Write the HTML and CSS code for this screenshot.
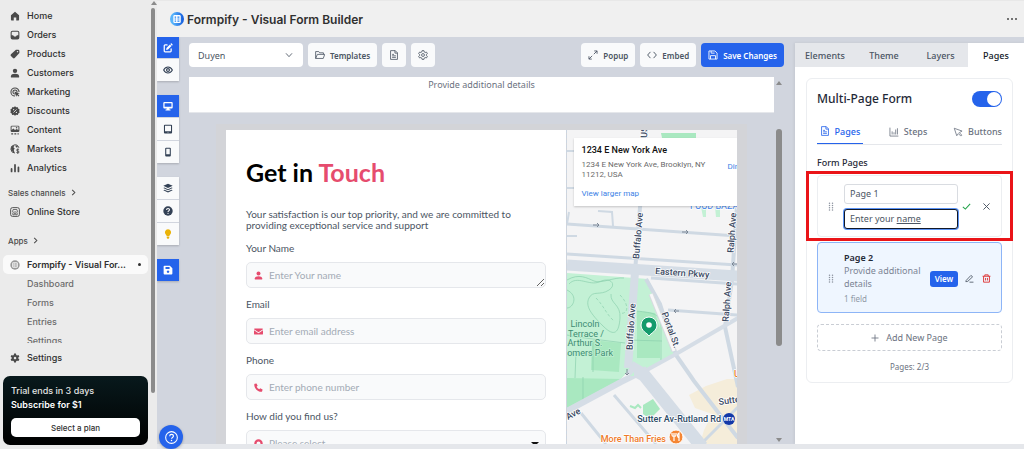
FILE: index.html
```html
<!DOCTYPE html>
<html lang="en">
<head>
<meta charset="utf-8">
<meta name="viewport" content="width=device-width, initial-scale=1">
<title>Formpify - Visual Form Builder</title>
<link rel="stylesheet" href="styles.css">
</head>
<body>
<svg class="sprite" aria-hidden="true">
  <symbol id="home" viewBox="0 0 16 16"><path fill="currentColor" d="M8 1 1.5 6.8V14a1 1 0 0 0 1 1H6v-4.500h4V15h3.500a1 1 0 0 0 1-1V6.800z"/></symbol>
  <symbol id="inbox" viewBox="0 0 16 16"><path fill="currentColor" fill-rule="evenodd" d="M4 1h8a3 3 0 0 1 3 3v8a3 3 0 0 1-3 3H4a3 3 0 0 1-3-3V4a3 3 0 0 1 3-3zm0 1.700A1.300 1.300 0 0 0 2.700 4v4.500H5l1.500 2h3l1.500-2h2.300V4A1.300 1.300 0 0 0 12 2.700z"/></symbol>
  <symbol id="tag" viewBox="0 0 16 16"><path fill="currentColor" fill-rule="evenodd" d="M9.500 1H13a2 2 0 0 1 2 2v3.500L7.500 14.500a2 2 0 0 1-2.800 0L1.500 11.300a2 2 0 0 1 0-2.800zM12 3a1.100 1.100 0 1 0 .1 0z"/></symbol>
  <symbol id="person" viewBox="0 0 16 16"><circle cx="8" cy="4.500" r="3.500" fill="currentColor"/><path fill="currentColor" d="M1.500 15v-2c0-2.500 3-3.700 6.500-3.700s6.500 1.200 6.500 3.700v2z"/></symbol>
  <symbol id="target" viewBox="0 0 16 16"><path fill="none" stroke="currentColor" stroke-width="1.700" d="M14.500 8A6.500 6.500 0 1 0 8 14.500M11.300 8A3.300 3.300 0 1 0 8 11.300"/><path fill="currentColor" d="m7 7 8.500 3-3 1.300 2.500 2.500-1.300 1.300-2.500-2.500L10 15.500z"/></symbol>
  <symbol id="discount" viewBox="0 0 16 16"><path fill="currentColor" d="m8 .5 2 1.500 2.600-.2.700 2.500 2.200 1.400L14.700 8l.8 2.400-2.200 1.400-.7 2.400L10 14l-2 1.500L6 14l-2.600.2-.7-2.400L.5 10.400 1.300 8 .5 5.700l2.200-1.400.7-2.500L6 2z"/><path stroke="#ebebeb" stroke-width="1.300" d="m5.500 10.500 5-5"/><circle cx="5.800" cy="5.800" r="1" fill="#ebebeb"/><circle cx="10.200" cy="10.200" r="1" fill="#ebebeb"/></symbol>
  <symbol id="image" viewBox="0 0 16 16"><path fill="currentColor" fill-rule="evenodd" d="M3 1h10a2 2 0 0 1 2 2v6a2 2 0 0 1-2 2H3a2 2 0 0 1-2-2V3a2 2 0 0 1 2-2zM2.500 8l3-2.500L8 8l2.500-1.500 3 1.500V2.500h-11z"/><circle cx="10.500" cy="4.500" r="1.200" fill="currentColor"/><path stroke="currentColor" stroke-width="2" d="M2 14h3m2 0h3m2 0h2"/></symbol>
  <symbol id="globe" viewBox="0 0 16 16"><path fill="none" stroke="currentColor" stroke-width="1.600" d="M8 14.400A6.500 6.500 0 1 1 14.200 6"/><path fill="currentColor" d="M7 2.500 5.500 5l2 2L6 9.500l1 3-2 .5-3.500-5L3 3.500zM9 2l4 2-2 2-2-1.500z"/><path fill="none" stroke="currentColor" stroke-width="1.500" d="M14.500 9c-1-1-4-1-4 .8s4 1 4 3-3.500 1.700-4.300.5M12.400 7.500v8"/></symbol>
  <symbol id="bars" viewBox="0 0 16 16"><path stroke="currentColor" stroke-width="2.800" stroke-linecap="round" d="M2.500 9.500v4M8 3v10.500M13.500 7v6.500"/></symbol>
  <symbol id="store" viewBox="0 0 16 16"><rect x="1" y="1" width="14" height="14" rx="3" fill="none" stroke="currentColor" stroke-width="1.500"/><path fill="none" stroke="currentColor" stroke-width="1.200" d="M4 7.500 5 4h6l1 3.500c-1 1.300-2 1-2.700 0-.7 1-2 1-2.700 0-.7 1-1.800 1.200-2.600 0zM4.500 9v3.500H7V10h2v2.500h2.500V9"/></symbol>
  <symbol id="chevron-right" viewBox="0 0 8 8"><path fill="none" stroke="currentColor" stroke-width="1.200" d="m2.500 1 3 3-3 3"/></symbol>
  <symbol id="chevron-down" viewBox="0 0 12 12"><path fill="none" stroke="currentColor" stroke-width="1.300" d="m1.500 3.500 4.500 5 4.500-5"/></symbol>
  <symbol id="app" viewBox="0 0 16 16"><circle cx="8" cy="8" r="7.500" fill="#999"/><rect x="3.500" y="3.500" width="9" height="9" rx="2" fill="#f5f5f5"/><path stroke="#777" stroke-width="1.400" d="M5.500 6h1.500m1.500 0h2M5.500 8h1.500m1.500 0h2M5.500 10h1.500m1.500 0h2"/></symbol>
  <symbol id="logo" viewBox="0 0 16 16"><linearGradient id="brand"><stop offset=".2" stop-color="#58b4fb"/><stop offset="1" stop-color="#1259dc"/></linearGradient><circle cx="8" cy="8" r="8" fill="url(#brand)"/><rect x="3.800" y="3.500" width="8.500" height="9" rx="1.500" fill="#fff"/><path stroke="#2684f1" stroke-width="1.400" d="M5.300 5.800h1.700m1.500 0h2.300M5.300 8h1.700m1.500 0h2.300M5.300 10.300h1.700m1.500 0h2.300"/></symbol>
  <symbol id="cog" viewBox="0 0 16 16"><path fill="currentColor" fill-rule="evenodd" d="M6.500.8h3l.5 2.300 1.300.7 2.200-.7 1.500 2.600-1.700 1.600v1.400l1.700 1.600-1.500 2.600-2.200-.7-1.300.7-.5 2.300h-3L6 12.900l-1.300-.7-2.200.7L1 10.300l1.700-1.600V7.300L1 5.700l1.500-2.600 2.200.7L6 3.100zM8 6a2 2 0 1 0 .1 0z"/></symbol>
  <symbol id="edit" viewBox="0 0 16 16"><path fill="none" stroke="currentColor" stroke-width="2" stroke-linecap="round" d="M6.500 3H3.300A1.300 1.300 0 0 0 2 4.300v8.400A1.300 1.300 0 0 0 3.300 14h8.400a1.300 1.300 0 0 0 1.300-1.300V9.500"/><path fill="currentColor" d="m5.500 8 5.600-5.600 2.500 2.500L8 10.500l-3 .5zM11.800 1.700l.8-.8a1 1 0 0 1 1.400 0l1.100 1.100a1 1 0 0 1 0 1.400l-.8.800z"/></symbol>
  <symbol id="eye" viewBox="0 0 16 16"><path fill="none" stroke="currentColor" stroke-width="1.700" d="M1 8c1.700-3 4-4.800 7-4.800S13.300 5 15 8c-1.700 3-4 4.800-7 4.800S2.700 11 1 8z"/><circle cx="8" cy="8" r="2.300" fill="none" stroke="currentColor" stroke-width="1.900"/></symbol>
  <symbol id="desktop" viewBox="0 0 16 16"><path fill="currentColor" fill-rule="evenodd" d="M2 1.500h12A1.500 1.500 0 0 1 15.500 3v7.500A1.500 1.500 0 0 1 14 12h-4l.5 1.500H12V15H4v-1.500h1.500L6 12H2a1.500 1.500 0 0 1-1.500-1.500V3A1.500 1.500 0 0 1 2 1.500zm.5 2V9h11V3.500z"/></symbol>
  <symbol id="tablet" viewBox="0 0 16 16"><path fill="currentColor" fill-rule="evenodd" d="M3 1h10a1.500 1.500 0 0 1 1.500 1.500v11A1.500 1.500 0 0 1 13 15H3a1.500 1.500 0 0 1-1.500-1.500v-11A1.500 1.500 0 0 1 3 1zm.2 1.600v9h9.600v-9z"/><circle cx="8" cy="13.200" r=".7" fill="#fff"/></symbol>
  <symbol id="phone-device" viewBox="0 0 16 16"><path fill="currentColor" fill-rule="evenodd" d="M5 1h6a1.500 1.500 0 0 1 1.500 1.500v11A1.500 1.500 0 0 1 11 15H5a1.500 1.500 0 0 1-1.500-1.500v-11A1.500 1.500 0 0 1 5 1zm.2 1.800v8.700h5.600V2.800z"/></symbol>
  <symbol id="layers" viewBox="0 0 16 16"><path fill="currentColor" d="m8 1 7.500 3.500L8 8 .5 4.500zM2.300 7.200 8 9.800l5.700-2.600 1.800.8L8 11.500.5 8zM2.300 10.700 8 13.300l5.700-2.600 1.800.8L8 15 .5 11.500z"/></symbol>
  <symbol id="question" viewBox="0 0 16 16"><circle cx="8" cy="8" r="7.500" fill="currentColor"/><path fill="none" stroke="#fff" stroke-width="1.700" d="M5.700 6.300c0-3 4.700-2.800 4.700-.2 0 1.700-2.400 1.700-2.400 3.300"/><circle cx="8" cy="11.600" r="1" fill="#fff"/></symbol>
  <symbol id="bulb" viewBox="0 0 16 16"><path fill="currentColor" d="M8 .5a5 5 0 0 1 3.300 8.700C10.500 10 10.200 10.500 10 11.500H6c-.2-1-.5-1.500-1.300-2.300A5 5 0 0 1 8 .5zM6 12.500h4v1.300A1.700 1.700 0 0 1 8.300 15.500h-.6A1.700 1.700 0 0 1 6 13.800z"/></symbol>
  <symbol id="disk" viewBox="0 0 16 16"><path fill="currentColor" fill-rule="evenodd" d="M2.500 1H11l4 4v8.500a1.500 1.500 0 0 1-1.500 1.500h-11A1.500 1.500 0 0 1 1 13.500v-11A1.500 1.500 0 0 1 2.500 1zM4 3v3.500h6.500V3zm4 5.700a2 2 0 1 0 .1 0z"/></symbol>
  <symbol id="disk-line" viewBox="0 0 16 16"><path fill="none" stroke="currentColor" stroke-width="1.400" stroke-linejoin="round" d="M1.500 1.500H11L14.500 5v9.500h-13zM4 14.500V9h8v5.500M5 1.500V5h5.500"/></symbol>
  <symbol id="folder" viewBox="0 0 16 16"><path fill="none" stroke="currentColor" stroke-width="1.300" stroke-linejoin="round" d="M1 13.500v-11h5L7.500 4.500h6V7M1 13.500 3.800 7h11.700l-2.300 6.500z"/></symbol>
  <symbol id="doc" viewBox="0 0 16 16"><path fill="none" stroke="currentColor" stroke-width="1.300" stroke-linejoin="round" d="M2.500 1H10l3.500 3.500V15h-11zM9.500 1v4h4M5 7h3M5 9.300h6M5 11.800h6"/></symbol>
  <symbol id="gear-line" viewBox="0 0 16 16"><path fill="none" stroke="currentColor" stroke-width="1.300" stroke-linejoin="round" d="M6.500 1h3l.5 2.200 1.300.8 2.200-.7L15 5.900l-1.700 1.500v1.200l1.700 1.500-1.500 2.600-2.200-.7-1.300.8-.5 2.200h-3L6 12.800l-1.300-.8-2.200.7L1 10.100l1.700-1.500V7.400L1 5.900l1.500-2.600 2.200.7L6 3.200z"/><circle cx="8" cy="8" r="2.300" fill="none" stroke="currentColor" stroke-width="1.300"/></symbol>
  <symbol id="expand" viewBox="0 0 16 16"><path fill="none" stroke="currentColor" stroke-width="1.400" d="M10 1.500h4.500V6M14.500 1.500 9.300 6.700M6 14.500H1.500V10M1.500 14.500l5.200-5.200"/></symbol>
  <symbol id="code" viewBox="0 0 16 16"><path fill="none" stroke="currentColor" stroke-width="1.500" d="M5.500 3 1 8l4.500 5M10.500 3 15 8l-4.500 5"/></symbol>
  <symbol id="chart" viewBox="0 0 16 16"><path fill="none" stroke="currentColor" stroke-width="1.300" d="M1.500 1v13.500H15M5 7v5M8 8.500V12M10.700 4v8M13.500 2v10"/></symbol>
  <symbol id="cursor" viewBox="0 0 16 16"><path fill="none" stroke="currentColor" stroke-width="1.300" stroke-linejoin="round" d="m2 2 12.500 4.500L10 9l4 4-1.500 1.500-4-4L6 14z"/></symbol>
  <symbol id="grip" viewBox="0 0 8 12"><g fill="currentColor"><circle cx="2" cy="1.500" r="1"/><circle cx="6" cy="1.500" r="1"/><circle cx="2" cy="4.500" r="1"/><circle cx="6" cy="4.500" r="1"/><circle cx="2" cy="7.500" r="1"/><circle cx="6" cy="7.500" r="1"/><circle cx="2" cy="10.500" r="1"/><circle cx="6" cy="10.500" r="1"/></g></symbol>
  <symbol id="check" viewBox="0 0 16 16"><path fill="none" stroke="currentColor" stroke-width="1.900" d="m1.500 8.500 4.500 4 8.500-9"/></symbol>
  <symbol id="close" viewBox="0 0 16 16"><path stroke="currentColor" stroke-width="1.700" d="m2.500 2.500 11 11m0-11-11 11"/></symbol>
  <symbol id="pencil" viewBox="0 0 16 16"><path fill="none" stroke="currentColor" stroke-width="1.500" stroke-linejoin="round" d="m2 11.500 8.500-9 3 2.500L5 13l-3.500.7zM8 14.500h7"/></symbol>
  <symbol id="trash" viewBox="0 0 16 16"><path fill="none" stroke="currentColor" stroke-width="1.600" d="M1 4h14M5 4V1.500h6V4M2.800 4v10.500h10.400V4M6.300 7v4.500M9.700 7v4.500"/></symbol>
  <symbol id="plus" viewBox="0 0 16 16"><path stroke="currentColor" stroke-width="1.700" d="M8 1v14M1 8h14"/></symbol>
  <symbol id="mail" viewBox="0 0 16 16"><path fill="currentColor" d="M1.500 2.500h13A1.500 1.500 0 0 1 16 4L8 9.500 0 4a1.500 1.500 0 0 1 1.500-1.500zM0 5.800l8 5.400 8-5.400V12a1.500 1.500 0 0 1-1.500 1.500h-13A1.500 1.500 0 0 1 0 12z"/></symbol>
  <symbol id="phone" viewBox="0 0 16 16"><path fill="currentColor" d="M1.500 1.500 4.500.7 6.500 5 4.700 6.600a10 10 0 0 0 4.700 4.700L11 9.500l4.300 2-.8 3A1.500 1.500 0 0 1 13 15.500C6.500 15.500.5 9.500.5 3a1.500 1.500 0 0 1 1-1.500z"/></symbol>
  <symbol id="ring" viewBox="0 0 16 16"><circle cx="8" cy="8" r="5.500" fill="none" stroke="currentColor" stroke-width="4"/></symbol>
  <symbol id="help" viewBox="0 0 16 16"><circle cx="8" cy="8" r="7.200" fill="none" stroke="currentColor" stroke-width="1.300"/><path fill="none" stroke="currentColor" stroke-width="1.400" d="M5.800 6.400c0-3 4.600-2.800 4.600-.2 0 1.700-2.400 1.700-2.400 3.400"/><circle cx="8" cy="11.700" r=".9" fill="currentColor"/></symbol>
</svg>

<div class="app">
  <aside class="sidebar">
    <div class="sidebar-body">
      <nav class="nav" aria-label="Main">
        <a href="#"><svg><use href="#home"/></svg>Home</a>
        <a href="#"><svg><use href="#inbox"/></svg>Orders</a>
        <a href="#"><svg><use href="#tag"/></svg>Products</a>
        <a href="#"><svg><use href="#person"/></svg>Customers</a>
        <a href="#"><svg><use href="#target"/></svg>Marketing</a>
        <a href="#"><svg><use href="#discount"/></svg>Discounts</a>
        <a href="#"><svg><use href="#image"/></svg>Content</a>
        <a href="#"><svg><use href="#globe"/></svg>Markets</a>
        <a href="#"><svg><use href="#bars"/></svg>Analytics</a>
        <a href="#" class="nav-group">Sales channels<svg><use href="#chevron-right"/></svg></a>
        <a href="#"><svg><use href="#store"/></svg>Online Store</a>
        <a href="#" class="nav-group apps">Apps<svg><use href="#chevron-right"/></svg></a>
        <a href="#" class="current"><svg><use href="#app"/></svg>Formpify - Visual For...<span class="dot"></span></a>
        <a href="#" class="sub">Dashboard</a>
        <a href="#" class="sub">Forms</a>
        <a href="#" class="sub">Entries</a>
        <a href="#" class="sub">Settings</a>
      </nav>
      <a href="#" class="settings"><svg><use href="#cog"/></svg>Settings</a>
      <section class="trial">
        <p>Trial ends in 3 days</p>
        <p class="offer">Subscribe for $1</p>
        <button type="button">Select a plan</button>
      </section>
    </div>
    <div class="side-scroll"><i class="arrow up"></i><i class="thumb"></i></div>
  </aside>

  <main class="main">
    <header class="header">
      <svg class="logo"><use href="#logo"/></svg>
      <h1>Formpify - Visual Form Builder</h1>
      <button type="button" class="more" aria-label="More"><i></i><i></i><i></i></button>
    </header>

    <div class="builder">
      <div class="rail">
        <div class="rail-group first">
          <button type="button" class="on" aria-label="Edit"><svg><use href="#edit"/></svg></button>
          <button type="button" aria-label="Preview"><svg><use href="#eye"/></svg></button>
        </div>
        <div class="rail-group">
          <button type="button" class="on" aria-label="Desktop"><svg><use href="#desktop"/></svg></button>
          <button type="button" aria-label="Tablet"><svg><use href="#tablet"/></svg></button>
          <button type="button" aria-label="Mobile"><svg><use href="#phone-device"/></svg></button>
        </div>
        <div class="rail-group">
          <button type="button" aria-label="Layers"><svg><use href="#layers"/></svg></button>
          <button type="button" aria-label="Guide"><svg><use href="#question"/></svg></button>
          <button type="button" class="tip" aria-label="Tips"><svg><use href="#bulb"/></svg></button>
        </div>
        <div class="rail-group">
          <button type="button" class="on" aria-label="Save"><svg><use href="#disk"/></svg></button>
        </div>
      </div>

      <div class="work">
        <div class="toolbar">
          <div class="picker">
            <select aria-label="Form"><option>Duyen</option></select>
            <svg><use href="#chevron-down"/></svg>
          </div>
          <button type="button" class="tool"><svg><use href="#folder"/></svg>Templates</button>
          <button type="button" class="tool square" aria-label="Document"><svg><use href="#doc"/></svg></button>
          <button type="button" class="tool square" aria-label="Settings"><svg><use href="#gear-line"/></svg></button>
          <span class="spacer"></span>
          <button type="button" class="tool"><svg><use href="#expand"/></svg>Popup</button>
          <button type="button" class="tool"><svg><use href="#code"/></svg>Embed</button>
          <button type="button" class="tool save"><svg><use href="#disk-line"/></svg>Save Changes</button>
        </div>

        <div class="stage">
          <div class="stage-body">
            <p class="banner">Provide additional details</p>
            <div class="canvas">
              <form class="form">
                <h2>Get in <span>Touch</span></h2>
                <p class="intro">Your satisfaction is our top priority, and we are committed to providing exceptional service and support</p>
                <label for="name">Your Name</label>
                <div class="field"><svg><use href="#person"/></svg><textarea id="name" rows="1" placeholder="Enter Your name"></textarea></div>
                <label for="email">Email</label>
                <div class="field"><svg><use href="#mail"/></svg><input id="email" type="email" placeholder="Enter email address"></div>
                <label for="tel">Phone</label>
                <div class="field"><svg><use href="#phone"/></svg><input id="tel" type="tel" placeholder="Enter phone number"></div>
                <label for="source">How did you find us?</label>
                <div class="field"><svg><use href="#ring"/></svg><select id="source"><option>Please select</option></select><i class="caret"></i></div>
              </form>
              <div class="map">
                <svg class="map-art" viewBox="0 0 171 314" preserveAspectRatio="xMinYMin slice" role="img" aria-label="Map">
                  <rect width="171" height="320" fill="#f4f4f5"/>
                  <path fill="#f5edda" d="m122 265 17-9 21-7h11v65h-38l4-14 8-16-17-6z"/>
                  <path fill="#a9e8c0" d="M94 3h35v5H95z"/>
                  <path fill="#c3f1d5" d="M134 77h5v10h-3zM148 77h5v10h-4z"/>
                  <path fill="#c3f1d5" d="m0 143 81 6 12 25 16 51-30 16-17-1-9 10-53 29z"/>
                  <path fill="#a9e8c0" d="m25 210 29 3-2 29-28-2zM70 181l18 2 5 16v29H70zM0 248l54 1-54 29z"/>
                  <path fill="#a9e8c0" d="m76 275 10-6 7 10-10 10-7-5z"/>
                  <path fill="none" stroke="#a9e8c0" stroke-width="2" d="m63 276 5 2 3-3 3 3"/>
                  <g fill="none" stroke="#8bd0ad" stroke-width=".7">
                    <path d="M2 154c8-9 20 2 30-2 12-6 18 3 10 8-9 6-16 0-20 8s2 16 14 28 16 6 17-8-10-14-9-24M0 160c12 6 6 18 0 18M0 150c12-7 20-2 27 1s20-4 30-3M26 212v30M0 205l10 2 48 6M70 181c16 2 22 2 24 14v35M60 210l35 1M16 247v24M9 222l-1 26M60 234l9 2"/>
                    <path stroke-dasharray="3 2" d="M29 168c8 8 10 16 18 23M53 165c10 10 8 20 0 18"/>
                  </g>
                  <g fill="none" stroke="#cfd9e3">
                    <path stroke-width="2" d="M0 21h8M0 58h8M31 81l14 1 1 14M2 82 0 94M0 106h10"/>
                    <path stroke-width="3" d="m0 94 171 12M0 124l171 11M84 148l87 6M101 180l70 5"/>
                    <path stroke-width="4" d="M79 0 68 142M170 75l-5 75-7 47 13 60"/>
                    <path stroke-width="4" d="m79 149 14 25 16 51 18 26 44 57"/>
                    <path stroke-width="3" d="m14 283 25 31M47 265l42 49M171 277l-38 38"/>
                  </g>
                  <g fill="none" stroke="#d5dde6">
                    <path stroke-width="11" d="m0 135 171 11"/>
                    <path stroke-width="8" d="m68 142-7 96"/>
                    <path stroke-width="6" d="m0 281 54-29 26-13"/>
                    <path stroke-width="4" d="m78 241 31-17 62-36"/>
                    <path stroke-width="13" d="m63 237 14 8 58 72"/>
                  </g>
                  <path fill="none" stroke="#d8dbe0" stroke-width="5" d="m84 164 23 57"/>
                  <path fill="none" stroke="#f7f7f8" stroke-width="3" d="m84 164 23 57"/>
                  <path fill="#c3f1d5" d="m63 246 4-4v4z"/>
                  <g fill="none" stroke="#74808e" stroke-width=".9"><path d="M26 95h6m-2-2 2 2-2 2M115 102h6m-2-2 2 2-2 2M112 181h-5m2-2-2 2 2 2M170 134h-5m2-2-2 2 2 2M60 239v6m-2-2 2 2 2-2"/></g>
                  <g class="street">
                    <text x="80" y="8" transform="rotate(-88 80 8)">US</text>
                    <text x="74" y="106" text-anchor="middle" transform="rotate(-85 74 106)">Buffalo Ave</text>
                    <text x="67" y="197" text-anchor="middle" transform="rotate(-86 67 197)">Buffalo Ave</text>
                    <text x="168" y="103" text-anchor="middle" transform="rotate(-86 168 103)">Ralph Ave</text>
                    <text x="163" y="172" text-anchor="middle" transform="rotate(-86 163 172)">Ralph Ave</text>
                    <text x="115" y="146" text-anchor="middle" transform="rotate(4 115 146)">Eastern Pkwy</text>
                    <text x="101" y="201" text-anchor="middle" transform="rotate(70 101 201)">Portal St.</text>
                    <text x="1" y="290" transform="rotate(-28 1 290)">Ave</text>
                    <text x="152" y="275" transform="rotate(-8 152 275)">Sutter</text>
                  </g>
                  <g class="park" text-anchor="middle">
                    <text x="18" y="197">Lincoln</text><text x="19" y="207">Terrace /</text><text x="18" y="216">Arthur S.</text>
                    <text x="46" y="226" text-anchor="end">Somers Park</text>
                  </g>
                  <text class="store" x="123" y="79">FOOD BAZAAR</text>
                  <text class="station" x="154" y="292" text-anchor="end">Sutter Av-Rutland Rd</text>
                  <circle cx="162" cy="289" r="6" fill="#1238a8"/>
                  <text class="mta" x="162" y="291" text-anchor="middle">MTA</text>
                  <text class="food" x="99" y="312" text-anchor="end">More Than Fries</text>
                  <text class="food" x="167" y="247">U</text>
                  <circle cx="109" cy="307" r="7" fill="#f58634" stroke="#fff"/>
                  <path fill="none" stroke="#fff" stroke-width="1.200" d="M107 303v8m-2-8v2c0 2 4 2 4 0v-2m3 8v-8c-2 1-2 4 0 5"/>
                  <path fill="#149b6c" stroke="#fff" d="M82 206c-2-3-8-5-8-11a8 8 0 0 1 16 0c0 6-6 8-8 11z"/>
                  <circle cx="82" cy="195" r="2.800" fill="#fff"/>
                </svg>
                <div class="place">
                  <div class="place-text">
                    <h3>1234 E New York Ave</h3>
                    <p>1234 E New York Ave, Brooklyn, NY 11212, USA</p>
                    <a href="#">View larger map</a>
                  </div>
                  <a href="#" class="directions">Directions</a>
                </div>
              </div>
            </div>
          </div>
          <div class="stage-scroll"><i class="arrow up"></i><i class="thumb"></i><i class="arrow down"></i></div>
        </div>
      </div>

      <aside class="panel">
        <div class="tabs" role="tablist">
          <button type="button" role="tab">Elements</button>
          <button type="button" role="tab">Theme</button>
          <button type="button" role="tab">Layers</button>
          <button type="button" role="tab" aria-selected="true" class="active">Pages</button>
        </div>
        <section class="card">
          <div class="card-head">
            <label for="multi">Multi-Page Form</label>
            <input id="multi" type="checkbox" role="switch" class="switch" checked>
          </div>
          <div class="subtabs" role="tablist">
            <button type="button" role="tab" aria-selected="true" class="active"><svg><use href="#doc"/></svg>Pages</button>
            <button type="button" role="tab"><svg><use href="#chart"/></svg>Steps</button>
            <button type="button" role="tab"><svg><use href="#cursor"/></svg>Buttons</button>
          </div>
          <h3>Form Pages</h3>
          <div class="page editing">
            <svg class="grip"><use href="#grip"/></svg>
            <div class="page-inputs">
              <input type="text" aria-label="Page title" value="Page 1">
              <div class="focus" role="textbox" contenteditable="true" aria-label="Page description">Enter your <u>name</u></div>
            </div>
            <button type="button" class="icon ok" aria-label="Confirm"><svg><use href="#check"/></svg></button>
            <button type="button" class="icon" aria-label="Cancel"><svg><use href="#close"/></svg></button>
          </div>
          <div class="page selected">
            <svg class="grip"><use href="#grip"/></svg>
            <div class="page-info">
              <h4>Page 2</h4>
              <p>Provide additional details</p>
              <small>1 field</small>
            </div>
            <button type="button" class="view">View</button>
            <button type="button" class="icon" aria-label="Rename"><svg><use href="#pencil"/></svg></button>
            <button type="button" class="icon danger" aria-label="Delete"><svg><use href="#trash"/></svg></button>
          </div>
          <button type="button" class="add"><svg><use href="#plus"/></svg>Add New Page</button>
          <p class="count">Pages: 2/3</p>
          <div class="highlight"></div>
        </section>
      </aside>
    </div>
    <button type="button" class="help" aria-label="Help"><svg><use href="#help"/></svg></button>
  </main>
</div>
</body>
</html>
```
FILE: styles.css
```css
* { box-sizing: border-box; }
body, h1, h2, h3, h4, p { margin: 0; }
body { font-family: Inter, "Liberation Sans", sans-serif; background: #e5e7eb; color: #303030; }
button, input, select, textarea { font: inherit; color: inherit; margin: 0; padding: 0; border: 0; background: none; }
button { display: flex; align-items: center; justify-content: center; white-space: nowrap; }
a { color: inherit; text-decoration: none; }
svg { width: 10px; height: 10px; flex: none; }
.sprite { position: absolute; width: 0; height: 0; }

.app { display: grid; grid-template-columns: 157px minmax(0, 1fr); height: 100vh; overflow: hidden; }

/* Sidebar */
.sidebar { display: flex; background: #ebebeb; min-height: 0; font-size: 9px; font-weight: 500; }
.sidebar-body { flex: 1; min-width: 0; display: flex; flex-direction: column; padding: 6px 2px 4px 3px; }
.nav { flex: 1; min-height: 0; overflow: hidden; }
.nav a, .settings { display: flex; align-items: center; gap: 7px; height: 19px; flex: none; padding-left: 7px; color: #303030; white-space: nowrap; }
.nav svg, .settings svg { color: #4a4a4a; }
.nav .nav-group { margin-top: 6px; padding-left: 5px; font-size: 8px; color: #4a4a4a; gap: 4px; }
.nav .apps { margin-top: 10px; }
.nav .nav-group svg { width: 7px; height: 7px; }
.nav .current { margin-top: 5px; background: #fafafa; border-radius: 5px; font-weight: 600; padding-right: 7px; }
.dot { width: 3px; height: 3px; border-radius: 50%; background: #303030; margin-left: auto; }
.nav .sub { padding-left: 24px; color: #6b6b6b; }
.settings { margin: 5px 0 9px; }
.trial { background: linear-gradient(#08191c, #000); border-radius: 7px; color: #e3e3e3; padding: 8px; line-height: 14px; display: flex; flex-direction: column; }
.trial .offer { font-weight: 600; color: #fff; }
.trial button { margin-top: 6px; height: 19px; background: #fff; color: #303030; border-radius: 5px; font-size: 8px; }
.side-scroll { width: 7px; display: flex; flex-direction: column; align-items: center; gap: 3px; padding-top: 1px; }
.side-scroll .thumb { width: 4px; height: 48%; background: #8b8b8b; border-radius: 2px; }
.arrow { width: 0; height: 0; border: 3px solid transparent; flex: none; }
.arrow.up { border-top: 0; border-bottom: 4px solid #8b8b8b; }
.arrow.down { border-bottom: 0; border-top: 4px solid #8b8b8b; margin-top: auto; }
.side-scroll .thumb { height: 86%; margin-right: 1px; }

/* Header */
.main { position: relative; display: flex; flex-direction: column; min-height: 0; padding-bottom: 5px; }
.header { height: 37px; flex: none; display: flex; align-items: center; gap: 3px; padding: 0 7px 0 13px; background: #f0f0f0; border-top: 1px solid #e8e8e8; }
.header h1 { font-size: 12px; font-weight: 600; color: #303030; }
.logo { width: 14px; height: 14px; }
.more { margin-left: auto; gap: 2px; }
.more i { width: 2px; height: 2px; border-radius: 50%; background: #4a4a4a; }

/* Builder shell */
.builder { flex: 1; min-height: 0; display: grid; grid-template-columns: 22px minmax(0, 1fr) 229px; background: #d1d5de; font-family: "Noto Sans", "Open Sans", sans-serif; overflow: hidden; }
.rail { display: flex; flex-direction: column; gap: 14px; }
.rail-group { display: grid; gap: 1px; box-shadow: 0 1px 2px #0003; }
.rail button { height: 22px; background: #f9fafb; color: #334155; }
.rail .first .on { height: 21px; }
.rail button.on { background: #2563eb; color: #fff; }
.rail button.tip { color: #eab308; }

.work { display: flex; flex-direction: column; padding: 6px 11px 0 10px; min-height: 0; }
.toolbar { display: flex; gap: 5px; height: 24px; flex: none; color: #4b5563; font-size: 8px; font-weight: 600; }
.picker { position: relative; width: 114px; }
.picker select { appearance: none; width: 100%; height: 100%; padding: 0 24px 0 9px; background: #fff; border-radius: 4px; font-size: 9px; font-weight: 400; }
.picker svg { position: absolute; right: 10px; top: 8px; width: 8px; height: 8px; pointer-events: none; }
.tool { gap: 5px; padding: 0 7px; border-radius: 4px; background: #f9fafb; }
.tool.square { width: 24px; padding: 0; }
.tool.save { background: #2563eb; color: #fff; }
.spacer { flex: 1; }

.stage { flex: 1; min-height: 0; display: flex; margin-top: 10px; }
.stage-body { flex: 1; min-width: 0; display: flex; flex-direction: column; }
.banner { flex: none; height: 36px; background: #fff; border-bottom: 1px solid #e5e7eb; text-align: center; font-size: 9px; line-height: 16px; color: #6b7280; }
.stage-scroll { width: 10px; display: flex; flex-direction: column; align-items: center; padding: 4px 0 2px; }
.stage-scroll .thumb { width: 6px; height: 60%; margin-top: 44px; border-radius: 3px; background: #8b8b8b; }

.canvas { flex: 1; min-height: 0; display: grid; grid-template-columns: 198fr 100fr; margin: 11px 27px 0; padding: 6px 10px 0; background: #d3d4d8; overflow: hidden; }

/* Contact form */
.form { background: #fff; padding: 28px 20px 0; font-family: Lato, "Open Sans", sans-serif; font-size: 10px; color: #4b5563; overflow: hidden; min-height: 0; }
.form h2 { font-size: 25px; line-height: 28px; font-weight: 700; color: #000; }
.form h2 span { color: #e64c6e; }
.form .intro { margin: 23px 0 9px; line-height: 11px; padding-right: 20px; }
.form label { display: block; line-height: 16px; margin-bottom: 6px; }
.field { display: flex; align-items: center; gap: 6px; height: 26px; margin-bottom: 8px; padding-left: 7px; background: #f9fafb; border: 1px solid #e5e7eb; border-radius: 5px; position: relative; }
.field svg { width: 9px; height: 9px; color: #e64c6e; }
.field input, .field textarea, .field select { flex: 1; min-width: 0; height: 24px; line-height: 24px; outline: 0; }
.field textarea { resize: vertical; display: block; overflow: hidden; }
.field select { appearance: none; color: #a3aab5; }
.field ::placeholder { color: #a3aab5; opacity: 1; }
.caret { position: absolute; right: 6px; top: 11px; border: 4px solid transparent; border-top-color: #111; border-bottom: 0; }

/* Map */
.map { position: relative; overflow: hidden; border-left: 1px dashed #cbd5e1; min-height: 0; font-family: Roboto, sans-serif; }
.map-art { width: 100%; height: 100%; display: block; }
.map-art text { paint-order: stroke; stroke: #fff; stroke-width: 1.500px; stroke-linejoin: round; font-size: 9px; }
.map-art .street { fill: #3b4a63; font-weight: 500; }
.map-art .park text { fill: #3d8c73; stroke: #c3f1d5; }
.map-art .store { fill: #3f86f0; }
.map-art .station { fill: #2b4a66; font-weight: 500; }
.map-art .food { fill: #ef7a28; font-weight: 500; }
.map-art .mta { fill: #fff; stroke: none; font-size: 5px; font-weight: 700; }
.place { position: absolute; left: 7px; right: 0; top: 8px; height: 68px; overflow: hidden; display: flex; padding: 6px 0 0 8px; background: #fff; box-shadow: 0 1px 2px #0003; font-size: 8px; }
.place-text { flex: none; width: 136px; }
.place h3 { font-size: 9px; line-height: 12px; font-weight: 500; color: #111; }
.place p { color: #6a6a6a; line-height: 10px; margin: 4px 0 9px; }
.place a { color: #3b82e6; line-height: 10px; display: block; }
.place .directions { margin: 18px 0 0 10px; }

/* Right panel */
.panel { margin-top: 6px; background: #fff; color: #1f2937; box-shadow: -1px 0 3px #0001; min-width: 0; }
.tabs { display: grid; grid-template-columns: 60px 58px 55px 1fr; height: 24px; background: #e5e7eb; font-size: 9px; font-weight: 500; color: #4b5563; }
.tabs .active { background: #fff; color: #111827; }
.card { position: relative; margin: 11px 11px 0; padding: 11px 10px 8px; border: 1px solid #eceef1; border-radius: 6px; display: flex; flex-direction: column; }
.card-head { display: flex; align-items: center; justify-content: space-between; height: 17px; font-size: 12px; font-weight: 500; }
.switch { appearance: none; width: 30px; height: 16px; border-radius: 8px; background: #2563eb; display: flex; justify-content: flex-end; padding: 1px; }
.switch::before { content: ""; width: 14px; height: 14px; border-radius: 50%; background: #fff; }
.switch:not(:checked) { background: #9ca3af; justify-content: flex-start; }
.subtabs { display: grid; grid-template-columns: 46px 1fr auto; margin-top: 12px; height: 26px; font-size: 9px; font-weight: 500; color: #6b7280; border-bottom: 1px solid #e5e7eb; }
.subtabs button { gap: 5px; }
.subtabs .active { color: #2563eb; border-bottom: 1px solid #2563eb; }
.card h3 { margin: 9px 0 3px; font-size: 9px; line-height: 18px; font-weight: 500; }
.page { display: flex; align-items: center; border: 1px solid #eceef1; border-radius: 4px; padding: 0 10px; }
.grip { width: 6px; height: 9px; color: #8b929e; margin-right: 10px; }
.icon { width: 10px; margin-left: 8px; color: #4b5563; }
.icon svg { width: 9px; height: 9px; }
.icon.ok { color: #22a34a; margin: 0 2px 0 3px; }
.icon.danger { color: #dc2f2f; }
.editing { height: 62px; margin-bottom: 5px; }
.page-inputs { flex: 1; min-width: 0; display: grid; gap: 5px; font-size: 9px; color: #4b5563; }
.page-inputs > * { width: 100%; height: 20px; line-height: 18px; padding: 0 5px; border: 1px solid #d9dce1; border-radius: 3px; background: #fff; white-space: nowrap; }
.page-inputs .focus { border-color: #111827; outline: 0; box-shadow: 0 0 0 1px #5b93f5; }
.selected { padding: 8px 10px 6px; background: #eff6ff; border-color: #8db5f7; }
.page-info { flex: 1; min-width: 0; font-size: 9px; line-height: 13px; }
.page-info h4 { font-size: 9px; font-weight: 600; }
.page-info p { color: #7b8494; }
.page-info small { display: block; margin-top: 1px; line-height: 15px; font-size: 8px; color: #9099a6; }
.view { background: #2563eb; color: #fff; border-radius: 3px; width: 28px; height: 16px; font-size: 8px; font-weight: 600; }
.selected .icon { margin-left: 6px; }
.selected .icon.danger { margin-left: 7px; }
.add { margin-top: 11px; height: 27px; gap: 7px; border: 1px dashed #c9cdd4; border-radius: 4px; font-size: 9px; color: #6b7280; }
.add svg { width: 8px; height: 8px; }
.count { margin-top: 9px; text-align: center; line-height: 14px; font-size: 8px; color: #6b7280; }
.highlight { position: absolute; left: -1px; right: -1px; top: 92px; height: 70px; border: 3px solid #ea1418; pointer-events: none; }

.help { position: absolute; left: 2px; bottom: 0; width: 24px; height: 24px; border-radius: 50%; background: #2563eb; color: #fff; box-shadow: 0 1px 3px #0004; }
.help svg { width: 13px; height: 13px; }
```
